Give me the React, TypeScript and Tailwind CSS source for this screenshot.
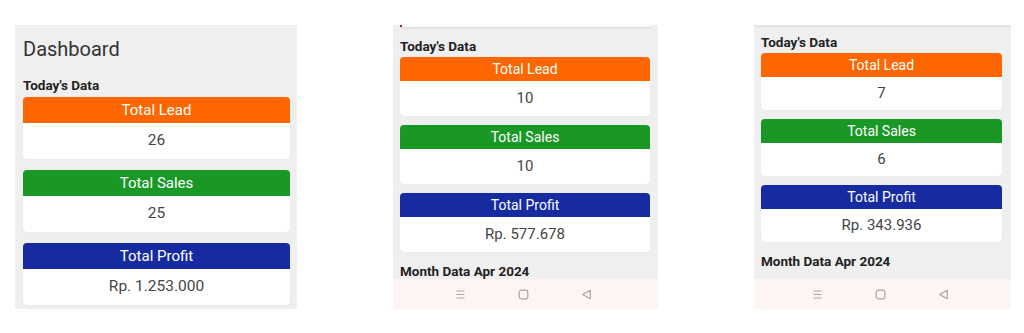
import React from "react";

type Card = { title: string; value: string; color: string };

const font = { fontFamily: "Roboto, 'Liberation Sans', sans-serif" };

function StatCard({
  c,
  head,
  body,
  titleCls,
  valueCls,
}: {
  c: Card;
  head: string;
  body: string;
  titleCls: string;
  valueCls: string;
}) {
  return (
    <div className="rounded-[4px] bg-white overflow-hidden shadow-[0_0_1px_rgba(0,0,0,0.15)]">
      <div className={`${head} ${c.color} flex items-center justify-center text-white ${titleCls}`}>
        {c.title}
      </div>
      <div className={`${body} flex items-center justify-center text-[#454545] ${valueCls}`}>
        {c.value}
      </div>
    </div>
  );
}

function NavBar() {
  return (
    <div className="h-[30px] bg-[#fdf5f3] flex items-center justify-center gap-[52px] pr-[4px] text-[#a5a5a5] shrink-0">
      <svg width="11" height="11" viewBox="0 0 11 11" fill="none" stroke="currentColor" strokeWidth="1.2">
        <path d="M1.5 2h8M1.5 5.5h8M1.5 9h8" />
      </svg>
      <svg width="11" height="11" viewBox="0 0 11 11" fill="none" stroke="currentColor" strokeWidth="1.2">
        <rect x="1.2" y="1.2" width="8.6" height="8.6" rx="2.2" />
      </svg>
      <svg width="11" height="11" viewBox="0 0 11 11" fill="none" stroke="currentColor" strokeWidth="1.1">
        <path d="M9.3 1.3L1.6 5.5l7.7 4.2z" strokeLinejoin="round" />
      </svg>
    </div>
  );
}

export default function App() {
  const p1: Card[] = [
    { title: "Total Lead", value: "26", color: "bg-[#fe6600]" },
    { title: "Total Sales", value: "25", color: "bg-[#199826]" },
    { title: "Total Profit", value: "Rp. 1.253.000", color: "bg-[#172ba0]" },
  ];
  const p2: Card[] = [
    { title: "Total Lead", value: "10", color: "bg-[#fe6600]" },
    { title: "Total Sales", value: "10", color: "bg-[#199826]" },
    { title: "Total Profit", value: "Rp. 577.678", color: "bg-[#172ba0]" },
  ];
  const p3: Card[] = [
    { title: "Total Lead", value: "7", color: "bg-[#fe6600]" },
    { title: "Total Sales", value: "6", color: "bg-[#199826]" },
    { title: "Total Profit", value: "Rp. 343.936", color: "bg-[#172ba0]" },
  ];

  return (
    <div className="w-[1024px] h-[333px] bg-white pt-[25px] pl-[15px] flex gap-[96px]" style={font}>
      {/* Panel 1 */}
      <div className="w-[282px] h-[284px] bg-[#efefef] pl-[8px] pr-[7px] pt-[12px] overflow-hidden flex flex-col">
        <div className="text-[20px] leading-[24px] text-[#333]">Dashboard</div>
        <div className="mt-[16px] text-[13.5px] leading-[16px] font-bold text-[#222]">Today's Data</div>
        <div className="mt-[4px] flex flex-col gap-[11px]">
          {p1.map((c) => (
            <StatCard key={c.title} c={c} head="h-[26px]" body="h-[36px]" titleCls="text-[15px]" valueCls="text-[15.5px]" />
          ))}
        </div>
      </div>

      {/* Panel 2 */}
      <div className="w-[265px] h-[284px] bg-[#efefef] overflow-hidden flex flex-col">
        <div className="px-[7px] pr-[8px] flex-1 flex flex-col">
          <div className="relative h-[2px] bg-white shadow-[0_1px_2px_rgba(0,0,0,0.12)] rounded-b-[3px]">
            <div className="absolute left-0 top-0 w-[2px] h-[2px] bg-[#b0105a]" />
          </div>
          <div className="mt-[11px] text-[13.5px] leading-[16px] font-bold text-[#222]">Today's Data</div>
          <div className="mt-[3px] flex flex-col gap-[9px]">
            {p2.map((c) => (
              <StatCard key={c.title} c={c} head="h-[24px]" body="h-[35px]" titleCls="text-[14px]" valueCls="text-[15px]" />
            ))}
          </div>
          <div className="mt-[11px] text-[13.5px] leading-[16px] font-bold text-[#222]">Month Data Apr 2024</div>
        </div>
        <NavBar />
      </div>

      {/* Panel 3 */}
      <div className="w-[257px] h-[284px] bg-[#efefef] overflow-hidden flex flex-col">
        <div className="h-[1px] bg-[#e2e2e2] shadow-[0_1px_2px_rgba(0,0,0,0.08)]" />
        <div className="pl-[7px] pr-[9px] flex-1 flex flex-col">
          <div className="mt-[8px] text-[13.5px] leading-[16px] font-bold text-[#222]">Today's Data</div>
          <div className="mt-[3px] flex flex-col gap-[9px]">
            {p3.map((c) => (
              <StatCard key={c.title} c={c} head="h-[24px]" body="h-[33px]" titleCls="text-[14px]" valueCls="text-[15px]" />
            ))}
          </div>
          <div className="mt-[11px] text-[13.5px] leading-[16px] font-bold text-[#222]">Month Data Apr 2024</div>
        </div>
        <NavBar />
      </div>
    </div>
  );
}
